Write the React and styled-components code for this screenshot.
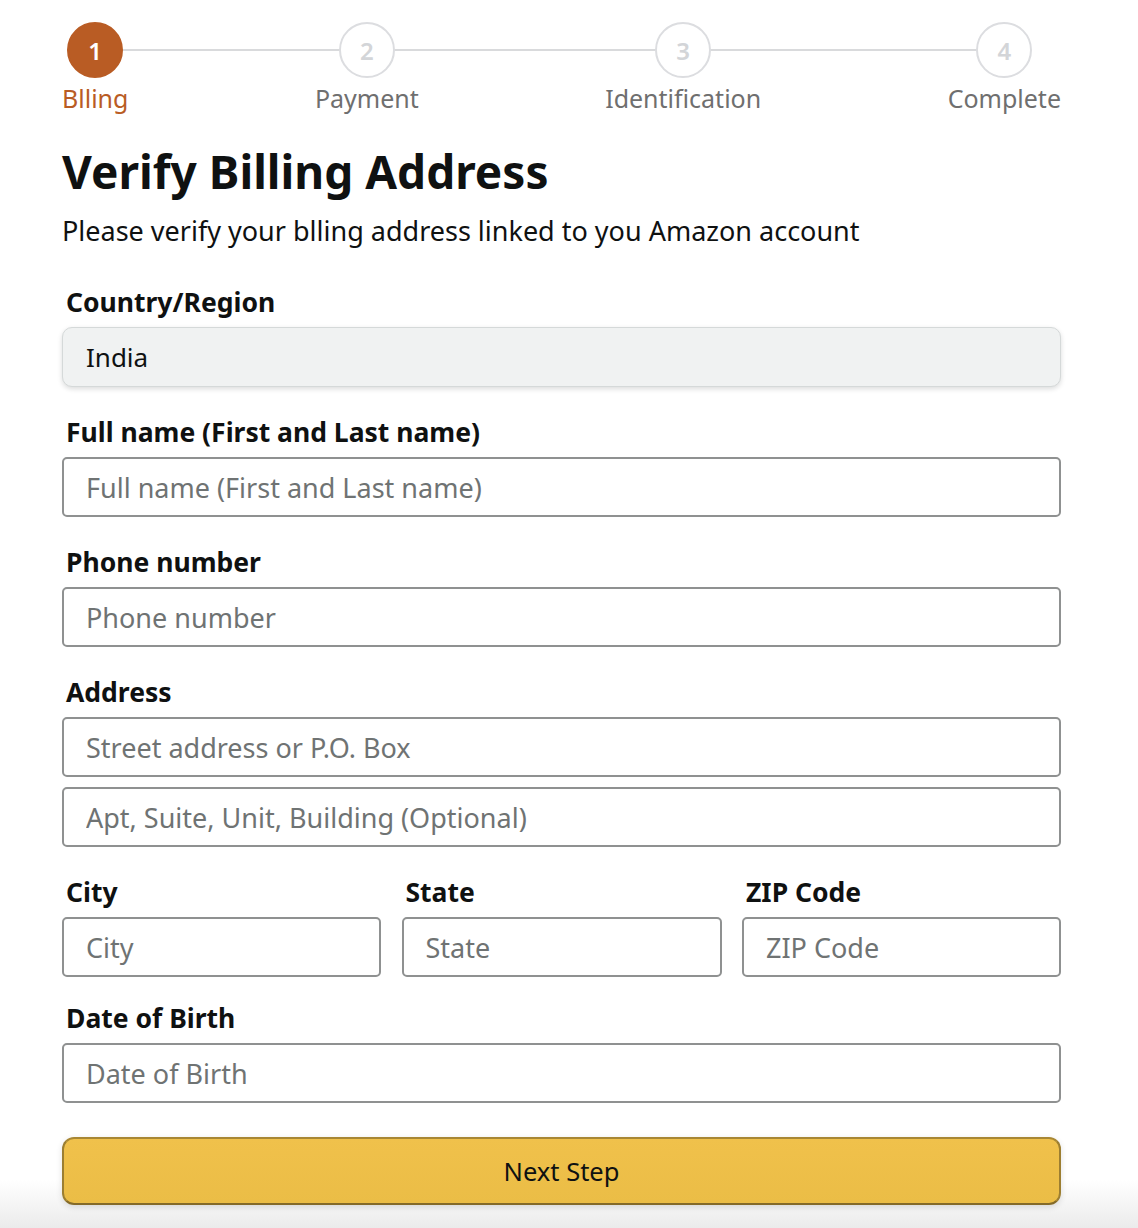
import React from 'react';
import styled, { createGlobalStyle } from 'styled-components';

const GlobalStyle = createGlobalStyle`
  html, body {
    margin: 0;
    padding: 0;
  }
  body {
    min-height: 1228px;
    font-family: "Noto Sans", "Open Sans", Arial, sans-serif;
    color: #0f1111;
    background: linear-gradient(to bottom, #ffffff 0, #ffffff 1180px, #ebebeb 1228px);
  }
`;

const Page = styled.div`
  width: 999px;
  padding: 22px 0 0 62px;
`;

const Stepper = styled.div`
  position: relative;
  display: flex;
  justify-content: space-between;
  align-items: flex-start;

  &::before {
    content: '';
    position: absolute;
    top: 27px;
    left: 34px;
    right: 56px;
    height: 2px;
    background: #d9dadc;
  }
`;

const Step = styled.div`
  position: relative;
  display: flex;
  flex-direction: column;
  align-items: center;
`;

const Circle = styled.div`
  box-sizing: border-box;
  width: 56px;
  height: 56px;
  border-radius: 50%;
  display: flex;
  align-items: center;
  justify-content: center;
  font-size: 24px;
  font-weight: 600;
  background: ${p => (p.$active ? '#b95c24' : '#ffffff')};
  border: 2px solid ${p => (p.$active ? '#b95c24' : '#dcdde0')};
  color: ${p => (p.$active ? '#ffffff' : '#d3d5d8')};
`;

const StepLabel = styled.div`
  margin-top: 4px;
  font-size: 25px;
  line-height: 32px;
  color: ${p => (p.$active ? '#b95c24' : '#6f6f6f')};
`;

const Title = styled.h1`
  margin: 29px 0 0;
  font-size: 46px;
  line-height: 56px;
  font-weight: 700;
  color: #0f1111;
`;

const Subtitle = styled.p`
  margin: 16px 0 0;
  font-size: 27px;
  line-height: 32px;
  color: #0f1111;
`;

const Form = styled.form`
  margin-top: 40px;
  display: flex;
  flex-direction: column;
`;

const Field = styled.div`
  display: flex;
  flex-direction: column;
  gap: 10px;
  margin-bottom: ${p => p.$gap ?? 30}px;
`;

const Label = styled.label`
  padding-left: 4px;
  font-size: 26.5px;
  line-height: 30px;
  font-weight: 700;
  color: #0f1111;
`;

const Select = styled.div`
  box-sizing: border-box;
  height: 60px;
  display: flex;
  align-items: center;
  padding: 0 23px;
  font-size: 26px;
  color: #0f1111;
  background: #f0f2f2;
  border: 1px solid #d5d9d9;
  border-radius: 10px;
  box-shadow: 0 2px 5px rgba(15, 17, 17, 0.15);
`;

const Input = styled.input`
  box-sizing: border-box;
  width: 100%;
  height: 60px;
  padding: 0 22px;
  font-family: inherit;
  font-size: 27px;
  color: #0f1111;
  background: #fff;
  border: 2px solid #8f9191;
  border-radius: 5px;
  outline: none;

  &::placeholder {
    color: #6f7373;
  }
`;

const Row = styled.div`
  display: grid;
  grid-template-columns: 319px 320px 319px;
  justify-content: space-between;
  margin-bottom: 26px;
`;

const Button = styled.button`
  box-sizing: border-box;
  width: 100%;
  height: 68px;
  margin-top: 4px;
  font-family: inherit;
  font-size: 25.5px;
  color: #0f1111;
  background: linear-gradient(to bottom, #f0c14b, #ebbd46);
  border: 2px solid;
  border-color: #a88734 #9c7e31 #846a29;
  border-radius: 12px;
  box-shadow: 0 2px 6px rgba(0, 0, 0, 0.12);
  cursor: pointer;
`;

const steps = ['Blling', 'Payment', 'Identification', 'Complete'];

export default function App() {
  return (
    <>
      <GlobalStyle />
      <Page>
        <Stepper>
          {steps.map((s, i) => (
            <Step key={s}>
              <Circle $active={i === 0}>{i + 1}</Circle>
              <StepLabel $active={i === 0}>{s}</StepLabel>
            </Step>
          ))}
        </Stepper>

        <Title>Verify Billing Address</Title>
        <Subtitle>Please verify your blling address linked to you Amazon account</Subtitle>

        <Form onSubmit={e => e.preventDefault()}>
          <Field>
            <Label>Country/Region</Label>
            <Select>India</Select>
          </Field>
          <Field>
            <Label>Full name (First and Last name)</Label>
            <Input placeholder="Full name (First and Last name)" />
          </Field>
          <Field>
            <Label>Phone number</Label>
            <Input placeholder="Phone number" />
          </Field>
          <Field>
            <Label>Address</Label>
            <Input placeholder="Street address or P.O. Box" />
            <Input placeholder="Apt, Suite, Unit, Building (Optional)" />
          </Field>
          <Row>
            <Field $gap={0}>
              <Label>City</Label>
              <Input placeholder="City" />
            </Field>
            <Field $gap={0}>
              <Label>State</Label>
              <Input placeholder="State" />
            </Field>
            <Field $gap={0}>
              <Label>ZIP Code</Label>
              <Input placeholder="ZIP Code" />
            </Field>
          </Row>
          <Field>
            <Label>Date of Birth</Label>
            <Input placeholder="Date of Birth" />
          </Field>
          <Button type="submit">Next Step</Button>
        </Form>
      </Page>
    </>
  );
}
